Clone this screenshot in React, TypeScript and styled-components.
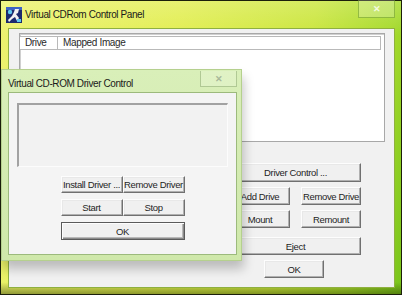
import React from 'react';
import styled, { createGlobalStyle, css } from 'styled-components';

/* ── page reset ─────────────────────────────────────────── */
const GlobalStyle = createGlobalStyle`
  html, body { margin: 0; padding: 0; background: #000; }
  #root { width: 402px; height: 295px; }
  * { box-sizing: border-box; }
`;

const uiFont = `"Liberation Sans", Arial, sans-serif`;

/* ── desktop ────────────────────────────────────────────── */
const Desktop = styled.div`
  position: relative;
  width: 402px;
  height: 295px;
  overflow: hidden;
  background: #000;
`;

/* ── main window ────────────────────────────────────────── */
const MainWindow = styled.div`
  width: 402px;
  height: 295px;
  border: 1px solid #1b1f0a;
  display: flex;
  flex-direction: column;
  background:
    linear-gradient(180deg, rgba(255,255,255,0.18) 0%, rgba(255,255,255,0) 12%, rgba(0,0,0,0) 96%, rgba(40,50,0,0.45) 100%),
    linear-gradient(100deg, #ecf270 0%, #e2ee52 40%, #cbe63e 70%, #a6da2c 88%, #78c41a 100%);
`;

const TitleBar = styled.div`
  height: 27px;
  display: flex;
  align-items: flex-start;
  padding-left: 5px;
  flex-shrink: 0;
`;

const Title = styled.span`
  font-family: ${uiFont};
  font-size: 10px;
  letter-spacing: -0.4px;
  color: #1a1a1a;
  white-space: nowrap;
  line-height: 1;
`;

const MainTitle = styled(Title)`
  margin-top: 9px;
  margin-left: 3px;
`;

const CloseButton = styled.div<{ $faded?: boolean }>`
  margin-left: auto;
  width: 37px;
  height: ${p => (p.$faded ? 16 : 18)}px;
  margin-top: ${p => (p.$faded ? 1 : -1)}px;
  margin-right: ${p => (p.$faded ? 4 : 6)}px;
  border: 1px solid ${p => (p.$faded ? 'rgba(120,150,90,0.45)' : 'rgba(90,140,20,0.5)')};
  border-top: none;
  background: ${p => (p.$faded ? 'rgba(255,255,255,0.18)' : 'rgba(255,255,255,0.22)')};
  display: flex;
  align-items: center;
  justify-content: center;
  font-family: ${uiFont};
  font-size: 9px;
  font-weight: bold;
  color: ${p => (p.$faded ? '#a8b89a' : '#f4fbe0')};
`;

const MainClient = styled.div`
  flex: 1;
  margin: 0 6px 6px 7px;
  background: #f1f1f1;
  border: 1px solid #8fb040;
  display: flex;
  flex-direction: column;
  padding: 4px 9px 0 10px;
`;

/* ── list view ──────────────────────────────────────────── */
const ListView = styled.div`
  height: 109px;
  background: #fff;
  border: 1px solid #a8a8a8;
  box-shadow: inset 1px 1px 0 #d0d0d0;
  padding: 2px 3px 0 0;
`;

const HeaderRow = styled.div`
  display: flex;
  height: 14px;
  border: 1px solid #b9b9b9;
  border-left: none;
  background: #fff;
`;

const HeaderCell = styled.div<{ $w?: number }>`
  width: ${p => (p.$w ? `${p.$w}px` : 'auto')};
  flex: ${p => (p.$w ? '0 0 auto' : '1')};
  border-right: ${p => (p.$w ? '1px solid #b9b9b9' : 'none')};
  font-family: ${uiFont};
  font-size: 10px;
  color: #2a2a2a;
  line-height: 12px;
  padding-left: 5px;
  letter-spacing: -0.35px;
`;

/* ── buttons ────────────────────────────────────────────── */
const Button = styled.div<{ $h?: number; $default?: boolean }>`
  height: ${p => p.$h ?? 18}px;
  display: flex;
  align-items: center;
  justify-content: center;
  white-space: nowrap;
  overflow: hidden;
  font-family: ${uiFont};
  font-size: 9.5px;
  letter-spacing: -0.35px;
  color: #1e1e1e;
  background: #f0f0f0;
  border: 1px solid;
  border-color: #fdfdfd #707070 #707070 #fdfdfd;
  box-shadow: inset -1px -1px 0 #b0b0b0, inset 1px 1px 0 #e8e8e8;
  ${p =>
    p.$default &&
    css`
      border-color: #5a5a5a;
      box-shadow: inset 1px 1px 0 #fdfdfd, inset -1px -1px 0 #8a8a8a, inset -2px -2px 0 #b8b8b8;
    `}
`;

const ButtonPanel = styled.div`
  width: 131px;
  margin: 21px 24px 0 auto;
  display: grid;
  grid-template-columns: 60px 60px;
  column-gap: 11px;
`;

const Wide = styled.div<{ $top: number }>`
  grid-column: 1 / -1;
  margin-top: ${p => p.$top}px;
  display: flex;
  justify-content: center;
  & > * { flex: 1; }
`;

const Cell = styled.div<{ $top: number }>`
  margin-top: ${p => p.$top}px;
`;

const OkSlot = styled.div`
  grid-column: 1 / -1;
  margin-top: 5px;
  display: flex;
  justify-content: center;
  padding-right: 3px;
  & > * { width: 60px; }
`;

/* ── child dialog ───────────────────────────────────────── */
const ChildWindow = styled.div`
  position: absolute;
  left: 1px;
  top: 69px;
  width: 241px;
  height: 192px;
  display: flex;
  flex-direction: column;
  background: linear-gradient(180deg, #d9efb9 0%, #cfe8aa 100%);
  border: 1px solid #b5d08e;
  box-shadow: 2px 8px 10px rgba(0, 0, 0, 0.22);
`;

const ChildTitleBar = styled.div`
  height: 22px;
  display: flex;
  align-items: flex-start;
  padding-left: 6px;
  flex-shrink: 0;
`;

const ChildTitle = styled(Title)`
  margin-top: 9px;
`;

const ChildClient = styled.div`
  flex: 1;
  margin: 0 4px 5px 6px;
  background: #f4f4f4;
  border: 1px solid #9cba7c;
  display: flex;
  flex-direction: column;
  padding: 10px 8px 0 8px;
`;

const StatusBox = styled.div`
  height: 64px;
  border-top: 2px solid #a2a2a2;
  border-left: 2px solid #a2a2a2;
  border-right: 1px solid #fcfcfc;
  border-bottom: 1px solid #fcfcfc;
  background: #f2f2f2;
`;

const DriverGrid = styled.div`
  width: 124px;
  margin: 9px auto 0;
  display: grid;
  grid-template-columns: 62px 62px;
  row-gap: 6px;
`;

const FullRow = styled.div`
  grid-column: 1 / -1;
`;

/* ── app icon ───────────────────────────────────────────── */
const AppIcon = () => (
  <svg width="16" height="16" viewBox="0 0 16 16" style={{ marginTop: 6 }}>
    <rect x="0" y="0" width="16" height="16" fill="#1c2a6e" />
    <rect x="0" y="0" width="16" height="3" fill="#3d62c4" />
    <path d="M9 2 L13 2 L12 6 L10 7 L13 11 L11 14 L9 10 L6 12 L3 15 L2 13 L6 9 L8 5 Z" fill="#f2f2f2" />
    <circle cx="4" cy="5" r="2.2" fill="#5ec8f0" />
    <rect x="11" y="12" width="4" height="3" fill="#5ec8f0" />
  </svg>
);

const App: React.FC = () => (
  <>
    <GlobalStyle />
    <Desktop>
      <MainWindow>
        <TitleBar>
          <AppIcon />
          <MainTitle>Virtual CDRom Control Panel</MainTitle>
          <CloseButton>✕</CloseButton>
        </TitleBar>
        <MainClient>
          <ListView>
            <HeaderRow>
              <HeaderCell $w={38}>Drive</HeaderCell>
              <HeaderCell>Mapped Image</HeaderCell>
            </HeaderRow>
          </ListView>

          <ButtonPanel>
            <Wide $top={0}>
              <Button $h={19}>Driver Control ...</Button>
            </Wide>
            <Cell $top={5}><Button>Add Drive</Button></Cell>
            <Cell $top={5}><Button>Remove Drive</Button></Cell>
            <Cell $top={5}><Button>Mount</Button></Cell>
            <Cell $top={5}><Button>Remount</Button></Cell>
            <Wide $top={9}>
              <Button>Eject</Button>
            </Wide>
            <OkSlot>
              <Button>OK</Button>
            </OkSlot>
          </ButtonPanel>
        </MainClient>
      </MainWindow>

      <ChildWindow>
        <ChildTitleBar>
          <ChildTitle>Virtual CD-ROM Driver Control</ChildTitle>
          <CloseButton $faded>✕</CloseButton>
        </ChildTitleBar>
        <ChildClient>
          <StatusBox />
          <DriverGrid>
            <Button $h={17}>Install Driver ...</Button>
            <Button $h={17}>Remove Driver</Button>
            <Button $h={17}>Start</Button>
            <Button $h={17}>Stop</Button>
            <FullRow>
              <Button $h={18} $default>OK</Button>
            </FullRow>
          </DriverGrid>
        </ChildClient>
      </ChildWindow>
    </Desktop>
  </>
);

export default App;
